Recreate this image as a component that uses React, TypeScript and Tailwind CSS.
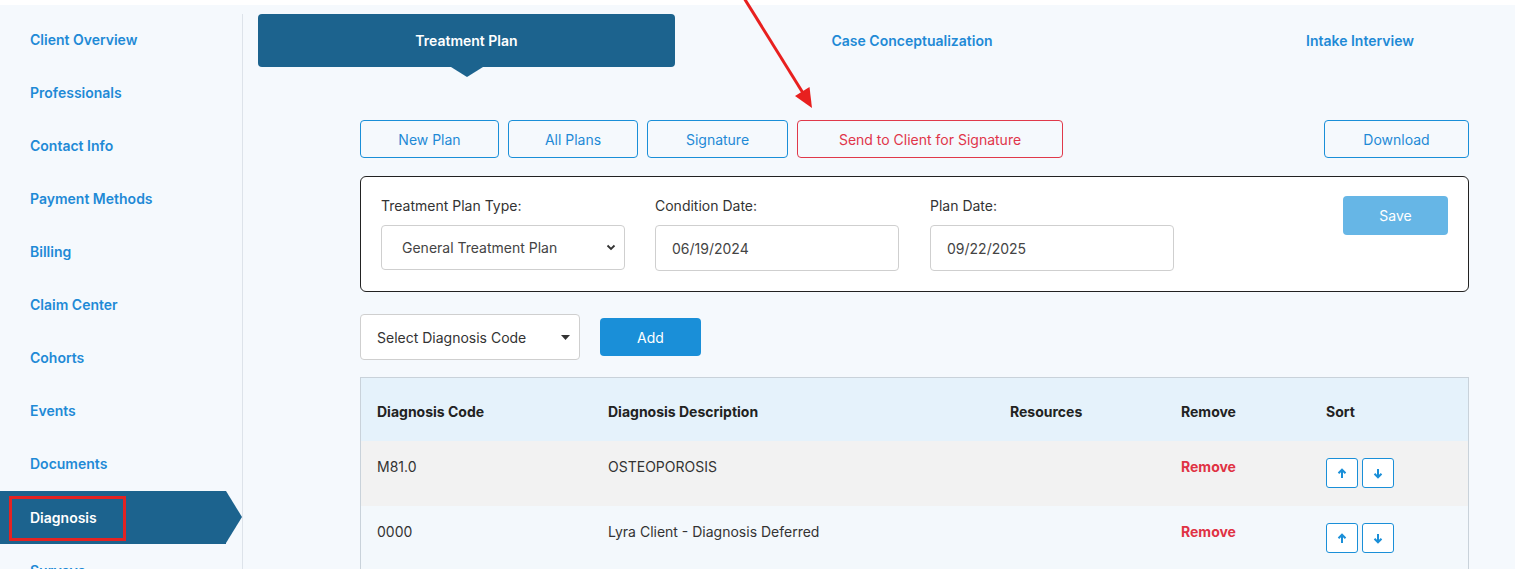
import React from "react";

const NAV = [
  "Client Overview",
  "Professionals",
  "Contact Info",
  "Payment Methods",
  "Billing",
  "Claim Center",
  "Cohorts",
  "Events",
  "Documents",
  "Diagnosis",
  "Surveys",
];

function ArrowUpIcon() {
  return (
    <svg width="10" height="11" viewBox="0 0 10 11" fill="none">
      <path d="M5 10V2" stroke="#1a8fd8" strokeWidth="2" />
      <path d="M1.5 5.2L5 1.7l3.5 3.5" stroke="#1a8fd8" strokeWidth="2" fill="none" />
    </svg>
  );
}
function ArrowDownIcon() {
  return (
    <svg width="10" height="11" viewBox="0 0 10 11" fill="none">
      <path d="M5 1v8" stroke="#1a8fd8" strokeWidth="2" />
      <path d="M1.5 5.8L5 9.3l3.5-3.5" stroke="#1a8fd8" strokeWidth="2" fill="none" />
    </svg>
  );
}

function Row({ code, desc, bg }: { code: string; desc: string; bg: string }) {
  return (
    <div
      className={`grid grid-cols-[247px_402px_171px_145px_1fr] h-[65px] pt-[16px] text-[14px] text-[#333] ${bg}`}
    >
      <div className="pl-[16px] leading-[20px]">{code}</div>
      <div className="leading-[20px]">{desc}</div>
      <div />
      <div className="leading-[20px] font-bold text-[#e03244]">Remove</div>
      <div className="flex gap-[4px] pt-[1px]">
        <button className="w-[32px] h-[30px] border border-[#1a8fd8] rounded-[3px] bg-white flex items-center justify-center">
          <ArrowUpIcon />
        </button>
        <button className="w-[32px] h-[30px] border border-[#1a8fd8] rounded-[3px] bg-white flex items-center justify-center">
          <ArrowDownIcon />
        </button>
      </div>
    </div>
  );
}

export default function App() {
  return (
    <div
      className="relative w-[1515px] h-[569px] overflow-hidden bg-white"
      style={{ fontFamily: "Inter, 'Noto Sans', sans-serif" }}
    >
      <div className="mt-[5px] flex h-full bg-[#f5f9fd]">
        {/* Sidebar */}
        <aside className="flex w-[243px] shrink-0">
          <nav className="w-[242px] pt-[8px]">
            {NAV.map((n) =>
              n === "Diagnosis" ? (
                <div key={n} className="relative mt-[1px] h-[53px] w-[226px] bg-[#1c638e]">
                  <div className="absolute right-[-16px] top-0 w-0 h-0 border-t-[26.5px] border-b-[26.5px] border-l-[16px] border-t-transparent border-b-transparent border-l-[#1c638e]" />
                  <div className="flex h-full items-center pl-[30px] text-[14px] font-semibold text-white">
                    {n}
                  </div>
                  <div className="absolute left-[9px] top-[5px] w-[117px] h-[45px] border-[3px] border-[#e32322]" />
                </div>
              ) : (
                <div
                  key={n}
                  className="flex h-[53px] items-center pl-[30px] text-[14px] font-semibold text-[#1f8ad6]"
                >
                  {n}
                </div>
              )
            )}
          </nav>
          <div className="mt-[9px] w-[1px] bg-[#dde3ea]" />
        </aside>

        {/* Main */}
        <main className="flex-1 pt-[9px]">
          {/* Tabs */}
          <div className="flex h-[53px] pl-[15px]">
            <div className="relative flex w-[417px] items-center justify-center rounded-[4px] bg-[#1c638e] pb-[1px] text-[14px] font-semibold text-white">
              Treatment Plan
              <div className="absolute left-1/2 top-full -translate-x-1/2 w-0 h-0 border-l-[16px] border-r-[16px] border-t-[10px] border-l-transparent border-r-transparent border-t-[#1c638e]" />
            </div>
            <div className="flex w-[474px] items-center justify-center pb-[1px] text-[14px] font-semibold text-[#1f8ad6]">
              Case Conceptualization
            </div>
            <div className="ml-[56px] flex w-[310px] items-center justify-center pb-[1px] text-[14px] font-semibold text-[#1f8ad6]">
              Intake Interview
            </div>
          </div>

          <div className="ml-[117px] w-[1109px]">
            {/* Buttons */}
            <div className="mt-[53px] flex h-[38px] gap-[9px] text-[14px]">
              <button className="w-[139px] rounded-[4px] border border-[#1a8fd8] text-[#1f8ad6]">New Plan</button>
              <button className="w-[130px] rounded-[4px] border border-[#1a8fd8] text-[#1f8ad6]">All Plans</button>
              <button className="w-[141px] rounded-[4px] border border-[#1a8fd8] text-[#1f8ad6]">Signature</button>
              <button className="w-[266px] rounded-[4px] border border-[#e0394a] text-[#e0354a]">
                Send to Client for Signature
              </button>
              <button className="ml-auto w-[145px] rounded-[4px] border border-[#1a8fd8] text-[#1f8ad6]">Download</button>
            </div>

            {/* Form box */}
            <div className="mt-[18px] flex h-[116px] rounded-[6px] border border-[#222] bg-white pl-[20px] pr-[20px] pt-[19px]">
              <div className="flex gap-[30px]">
                <div className="w-[244px]">
                  <div className="mb-[9px] text-[14px] leading-[20px] text-[#333]">Treatment Plan Type:</div>
                  <div className="flex h-[45px] items-center justify-between rounded-[4px] border border-[#cfcfcf] bg-white pl-[20px] pr-[8px] text-[14px] text-[#444]">
                    General Treatment Plan
                    <svg width="10" height="7" viewBox="0 0 10 7">
                      <path d="M1.5 1.5L5 5l3.5-3.5" stroke="#333" strokeWidth="1.8" fill="none" />
                    </svg>
                  </div>
                </div>
                <div className="w-[244px]">
                  <div className="mb-[9px] text-[14px] leading-[20px] text-[#333]">Condition Date:</div>
                  <div className="flex h-[46px] items-center rounded-[4px] border border-[#cfcfcf] bg-white pl-[16px] text-[14px] text-[#444]">
                    06/19/2024
                  </div>
                </div>
                <div className="ml-[1px] w-[244px]">
                  <div className="mb-[9px] text-[14px] leading-[20px] text-[#333]">Plan Date:</div>
                  <div className="flex h-[46px] items-center rounded-[4px] border border-[#cfcfcf] bg-white pl-[16px] text-[14px] text-[#444]">
                    09/22/2025
                  </div>
                </div>
              </div>
              <button className="ml-auto h-[39px] w-[105px] rounded-[4px] bg-[#66b6e6] text-[14px] text-white">
                Save
              </button>
            </div>

            {/* Diagnosis select */}
            <div className="mt-[22px] flex items-center gap-[20px]">
              <div className="flex h-[46px] w-[220px] items-center justify-between rounded-[4px] border border-[#cfcfcf] bg-white pl-[16px] pr-[9px] text-[14px] text-[#333]">
                Select Diagnosis Code
                <svg width="9" height="5" viewBox="0 0 9 5">
                  <path d="M0 0h9L4.5 5z" fill="#333" />
                </svg>
              </div>
              <button className="h-[38px] w-[101px] rounded-[4px] bg-[#1a8fd8] text-[14px] text-white">Add</button>
            </div>

            {/* Table */}
            <div className="mt-[17px] border border-b-0 border-[#c9d2da]">
              <div className="grid h-[63px] grid-cols-[247px_402px_171px_145px_1fr] items-center bg-[#e5f2fb] pt-[4px] text-[14px] font-bold text-[#222]">
                <div className="pl-[16px]">Diagnosis Code</div>
                <div>Diagnosis Description</div>
                <div>Resources</div>
                <div>Remove</div>
                <div>Sort</div>
              </div>
              <Row code="M81.0" desc="OSTEOPOROSIS" bg="bg-[#f2f2f2]" />
              <Row code="0000" desc="Lyra Client - Diagnosis Deferred" bg="bg-[#f3f8fc]" />
            </div>
          </div>
        </main>
      </div>

      {/* Annotation arrow */}
      <svg className="pointer-events-none absolute left-0 top-0" width="1515" height="569">
        <line x1="744" y1="-2" x2="803" y2="93" stroke="#e8201f" strokeWidth="3" />
        <polygon points="812,108 809.5,87 795,96" fill="#e8201f" />
      </svg>
    </div>
  );
}
